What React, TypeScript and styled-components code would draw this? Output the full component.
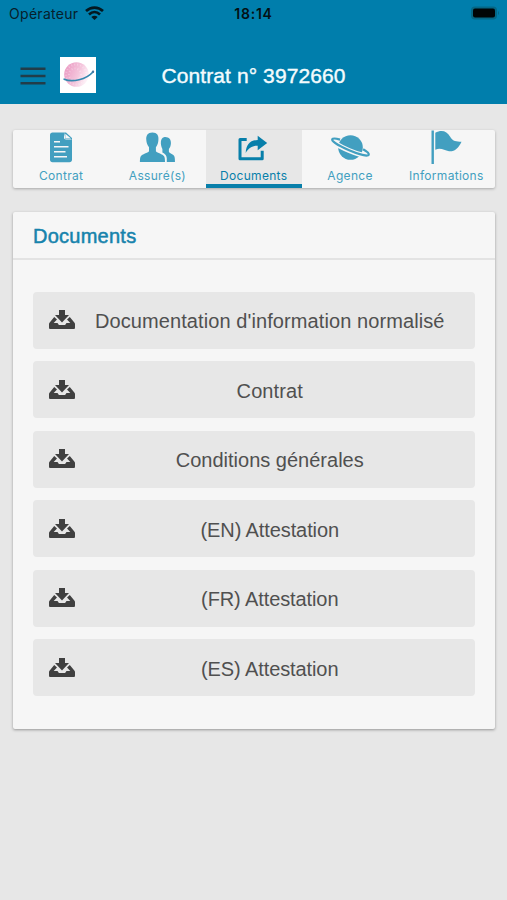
import React from "react";
import styled, { createGlobalStyle } from "styled-components";

const GlobalStyle = createGlobalStyle`
  * { box-sizing: border-box; }
  body { margin: 0; background: #e7e7e7; font-family: "Liberation Sans", Arial, sans-serif; }
`;

const Screen = styled.div`
  width: 507px;
  height: 900px;
  overflow: hidden;
  background: #e7e7e7;
`;

const Header = styled.header`
  height: 103.5px;
  background: #007eac;
`;

const StatusBar = styled.div`
  display: grid;
  grid-template-columns: 1fr auto 1fr;
  align-items: center;
  height: 27px;
  padding: 0 7px 0 9px;
  color: #07202b;
  font-family: Inter, sans-serif;
  font-size: 14px;
`;

const Carrier = styled.div`
  display: flex;
  align-items: center;
  gap: 7px;
  letter-spacing: 0.3px;
  svg { margin-top: -2px; }
`;

const Clock = styled.div`
  padding-right: 2px;
  color: #041015;
  font-weight: 600;
  letter-spacing: 0.75px;
`;

const Battery = styled.svg`
  justify-self: end;
  margin-top: -1px;
`;

const NavBar = styled.div`
  display: grid;
  grid-template-columns: 76px 1fr 76px;
  align-items: center;
  height: 76.5px;
  padding: 22px 20px 0;
`;

const NavStart = styled.div`
  display: flex;
  align-items: center;
  gap: 14px;
  margin-top: -3px;
`;

const Title = styled.h1`
  margin: 0;
  color: #f4fbfd;
  font-size: 21px;
  font-weight: 400;
  letter-spacing: 0.1px;
  -webkit-text-stroke: 0.4px;
  text-align: center;
  white-space: nowrap;
`;

const Main = styled.main`
  display: flex;
  flex-direction: column;
  gap: 24px;
  padding: 26px 12.5px 0 13px;
`;

const Tabs = styled.nav`
  display: grid;
  grid-template-columns: repeat(5, 1fr);
  height: 58px;
  border-radius: 2px;
  background: #f6f6f6;
  box-shadow: 0 1px 3px rgba(0, 0, 0, 0.28);
`;

const Tab = styled.button<{ $active?: boolean }>`
  display: flex;
  flex-direction: column;
  align-items: center;
  min-width: 0;
  padding: 0;
  border: 0;
  border-bottom: 4px solid ${(p) => (p.$active ? "#087faa" : "transparent")};
  background: ${(p) => (p.$active ? "#e7e7e7" : "transparent")};
  color: ${(p) => (p.$active ? "#087faa" : "#429fc0")};
  svg { flex: none; }
`;

const TabLabel = styled.span`
  margin-top: 1px;
  font: 400 12px/17px Inter, sans-serif;
  letter-spacing: 0.3px;
  white-space: nowrap;
`;

const Card = styled.section`
  height: 517px;
  border-radius: 2px;
  background: #f6f6f6;
  box-shadow: 0 1px 3px rgba(0, 0, 0, 0.36);
`;

const CardTitle = styled.h2`
  height: 48px;
  margin: 0;
  padding: 0 20px;
  border-bottom: 2px solid #e3e3e3;
  color: #1683ac;
  font-size: 20px;
  font-weight: 400;
  line-height: 48px;
  letter-spacing: 0.25px;
  -webkit-text-stroke: 0.5px;
`;

const DocumentList = styled.div`
  display: flex;
  flex-direction: column;
  gap: 12.6px;
  padding: 32px 19.5px 0 20px;
`;

const DocumentButton = styled.button`
  display: grid;
  grid-template-columns: 26px 1fr;
  align-items: center;
  height: 57px;
  padding: 0 15px 0 15.5px;
  border: 0;
  border-radius: 4px;
  background: #e7e7e7;
  color: #505050;
  font: 400 20px/24px "Liberation Sans", Arial, sans-serif;
  svg { color: #404040; margin-top: -1px; }
`;

const DocumentLabel = styled.span<{ $spacing: number }>`
  padding: 2px 0 0 5px;
  text-align: center;
  white-space: nowrap;
  letter-spacing: ${(p) => p.$spacing}px;
`;

const DownloadIcon = () => (
  <svg width="26" height="19" viewBox="0 0 26 19" fill="currentColor">
    <path d="M10 0h6v5h4l-7 7.500L6 5h4z" />
    <path d="M5.200 7 8 9.400 4.700 13h3.800l1.400 2h6.200l1.400-2h3.800L18 9.400 20.800 7l4.700 5.700.5 1v3.800c0 1-.5 1.500-1.500 1.500h-23C.5 19 0 18.500 0 17.500v-3.800l.5-1z" />
  </svg>
);

const MenuIcon = () => (
  <svg width="26" height="20" viewBox="0 0 26 20" fill="none" stroke="#213d49" strokeWidth="2.500">
    <path d="M.5 3.800h25M.5 11h25M.5 18.300h25" />
  </svg>
);

const Logo = () => (
  <svg width="36" height="36" viewBox="0 0 36 36" fill="none">
    <defs>
      <linearGradient id="planet" x1="0" y1=".3" x2="1" y2=".7">
        <stop offset="0" stopColor="#eb9bc3" />
        <stop offset=".55" stopColor="#f4c5dc" />
        <stop offset="1" stopColor="#fffafd" />
      </linearGradient>
    </defs>
    <path fill="#fff" d="M0 0h36v36H0z" />
    <circle cx="16.500" cy="17.500" r="12.300" fill="url(#planet)" />
    <circle cx="16" cy="17.500" r="10" stroke="#fff" strokeOpacity=".3" strokeWidth="2" strokeDasharray="1 2" />
    <circle cx="15" cy="17.500" r="6" stroke="#fff" strokeOpacity=".3" strokeWidth="2" strokeDasharray="1 2" />
    <path d="M4.200 22.200c8 3.500 22 .4 29-7.500" stroke="#3588af" strokeWidth="1.700" strokeLinecap="round" />
    <circle cx="33" cy="14.700" r="1.200" fill="#4a78a2" />
  </svg>
);

const WifiIcon = () => (
  <svg width="19" height="14" viewBox="0 0 19 14" fill="none" stroke="#041820" strokeWidth="2.700">
    <path d="M1 5.100c5-4.700 12-4.700 17 0M4 8.400c3.300-3 7.700-3 11 0" />
    <path d="M6.300 11c2-1.800 4.400-1.800 6.400 0l-3.200 3z" fill="#041820" stroke="none" />
  </svg>
);

const icons = {
  contract: (
    <>
      <path d="M39.500 2.500H51v5c0 1.300.7 2 2 2h6v20.300c0 1.500-1 2.500-2.500 2.500h-17c-1.500 0-2.500-1-2.500-2.500V5c0-1.500 1-2.500 2.500-2.500z" />
      <path d="M51 2.500h2l6 5.500v2l-1-1h-5.500z" />
      <path d="M52.300 3.800v3.500c0 .8.500 1.300 1.300 1.300H58z" fill="#f6f6f6" />
      <path d="M41 11.800h6M41 16.800h14.500M41 21.800h11.500M41 26.800h13" stroke="#f6f6f6" strokeWidth="1.500" />
    </>
  ),
  people: (
    <g transform="translate(-7.100)">
      <path d="M62 7.200c4.600-.7 7.500 2.200 7 6.500-.3 2.600-1 4.100-2 5.400v3c1 1.500 4.700 2.200 5.600 4.600.5 1.500.5 5.300.5 5.300h-8.200v-3.500c-.3-3.600-1.700-4.600-4.400-6.100v-3.300c-2.500-4.900-2-11.300 1.500-11.900z" />
      <path d="M50.500 2.600c4.700 0 6.500 3 6 7.400-.2 2.800-.7 5.100-2.500 7.200v4c1.500 2 6.800 2.600 8.200 5 .7 1.200.9 3 .9 5.800H38c0-2.800.2-4.600.9-5.800 1.400-2.400 6.900-3 8.200-5v-4c-1.800-2.100-2.500-4.400-2.700-7.200-.4-4.400 1.400-7.400 6.100-7.400z" />
    </g>
  ),
  share: (
    <g transform="translate(-6.300)">
      <path d="M47 9.500h-6.700v19.200h22.200v-8" fill="none" stroke="currentColor" strokeWidth="3" strokeLinejoin="round" />
      <path d="M46 23c.5-8 4-12.800 12-13V5.800l9.500 7.200-9.500 7.200v-4.500c-5-.1-9 2-12 7.300z" />
    </g>
  ),
  planet: (
    <>
      <circle cx="48.500" cy="17.500" r="12.300" />
      <g transform="rotate(23 48.500 17)" fill="none">
        <path d="M34 14.200c-4 .6-6 1.700-6 2.800 0 2.200 9 3.800 20.500 3.800S69 19.200 69 17c0-1.100-2-2.200-6-2.800" stroke="#f6f6f6" strokeWidth="5" />
        <path d="M36 14.200c-4.500.6-7.300 1.700-7.300 2.800 0 2.200 8.800 3.500 19.800 3.500s19.800-1.300 19.800-3.500c0-1.100-2.800-2.200-7.300-2.800" stroke="currentColor" strokeWidth="2.300" />
      </g>
    </>
  ),
  flag: (
    <>
      <path d="M33.500.5h2.400V34h-2.400z" />
      <path d="M37.300 2.700C43.500-.8 49 1 52 6.500c3 5.200 6.500 5 11.500 5.200-3 6.500-7 10-12.500 9.500-5-.5-7.700-4-13.700-1.500z" />
    </>
  ),
};

const tabs: { label: string; icon: keyof typeof icons; active?: boolean }[] = [
  { label: "Contrat", icon: "contract" },
  { label: "Assuré(s)", icon: "people" },
  { label: "Documents", icon: "share", active: true },
  { label: "Agence", icon: "planet" },
  { label: "Informations", icon: "flag" },
];

const documents = [
  { label: "Documentation d'information normalisé", spacing: 0.09 },
  { label: "Contrat", spacing: 0.1 },
  { label: "Conditions générales", spacing: 0 },
  { label: "(EN) Attestation", spacing: -0.1 },
  { label: "(FR) Attestation", spacing: -0.1 },
  { label: "(ES) Attestation", spacing: -0.1 },
];

export default function App() {
  return (
    <Screen>
      <GlobalStyle />
      <Header>
        <StatusBar>
          <Carrier>Opérateur <WifiIcon /></Carrier>
          <Clock>18:14</Clock>
          <Battery width="30" height="16" viewBox="0 0 30 16">
            <rect x="1" y="1.500" width="26" height="13" rx="4" fill="#056785" />
            <rect x="3" y="3.500" width="22" height="9" rx="2" fill="#010506" />
            <path d="M28 6c1.300.8 1.300 3.200 0 4z" fill="#056785" />
          </Battery>
        </StatusBar>
        <NavBar>
          <NavStart><MenuIcon /><Logo /></NavStart>
          <Title>Contrat n° 3972660</Title>
        </NavBar>
      </Header>
      <Main>
        <Tabs>
          {tabs.map((tab) => (
            <Tab key={tab.label} $active={tab.active}>
              <svg width="96" height="36" viewBox="0 0 96 36" fill="currentColor">{icons[tab.icon]}</svg>
              <TabLabel>{tab.label}</TabLabel>
            </Tab>
          ))}
        </Tabs>
        <Card>
          <CardTitle>Documents</CardTitle>
          <DocumentList>
            {documents.map((doc) => (
              <DocumentButton key={doc.label}>
                <DownloadIcon />
                <DocumentLabel $spacing={doc.spacing}>{doc.label}</DocumentLabel>
              </DocumentButton>
            ))}
          </DocumentList>
        </Card>
      </Main>
    </Screen>
  );
}
